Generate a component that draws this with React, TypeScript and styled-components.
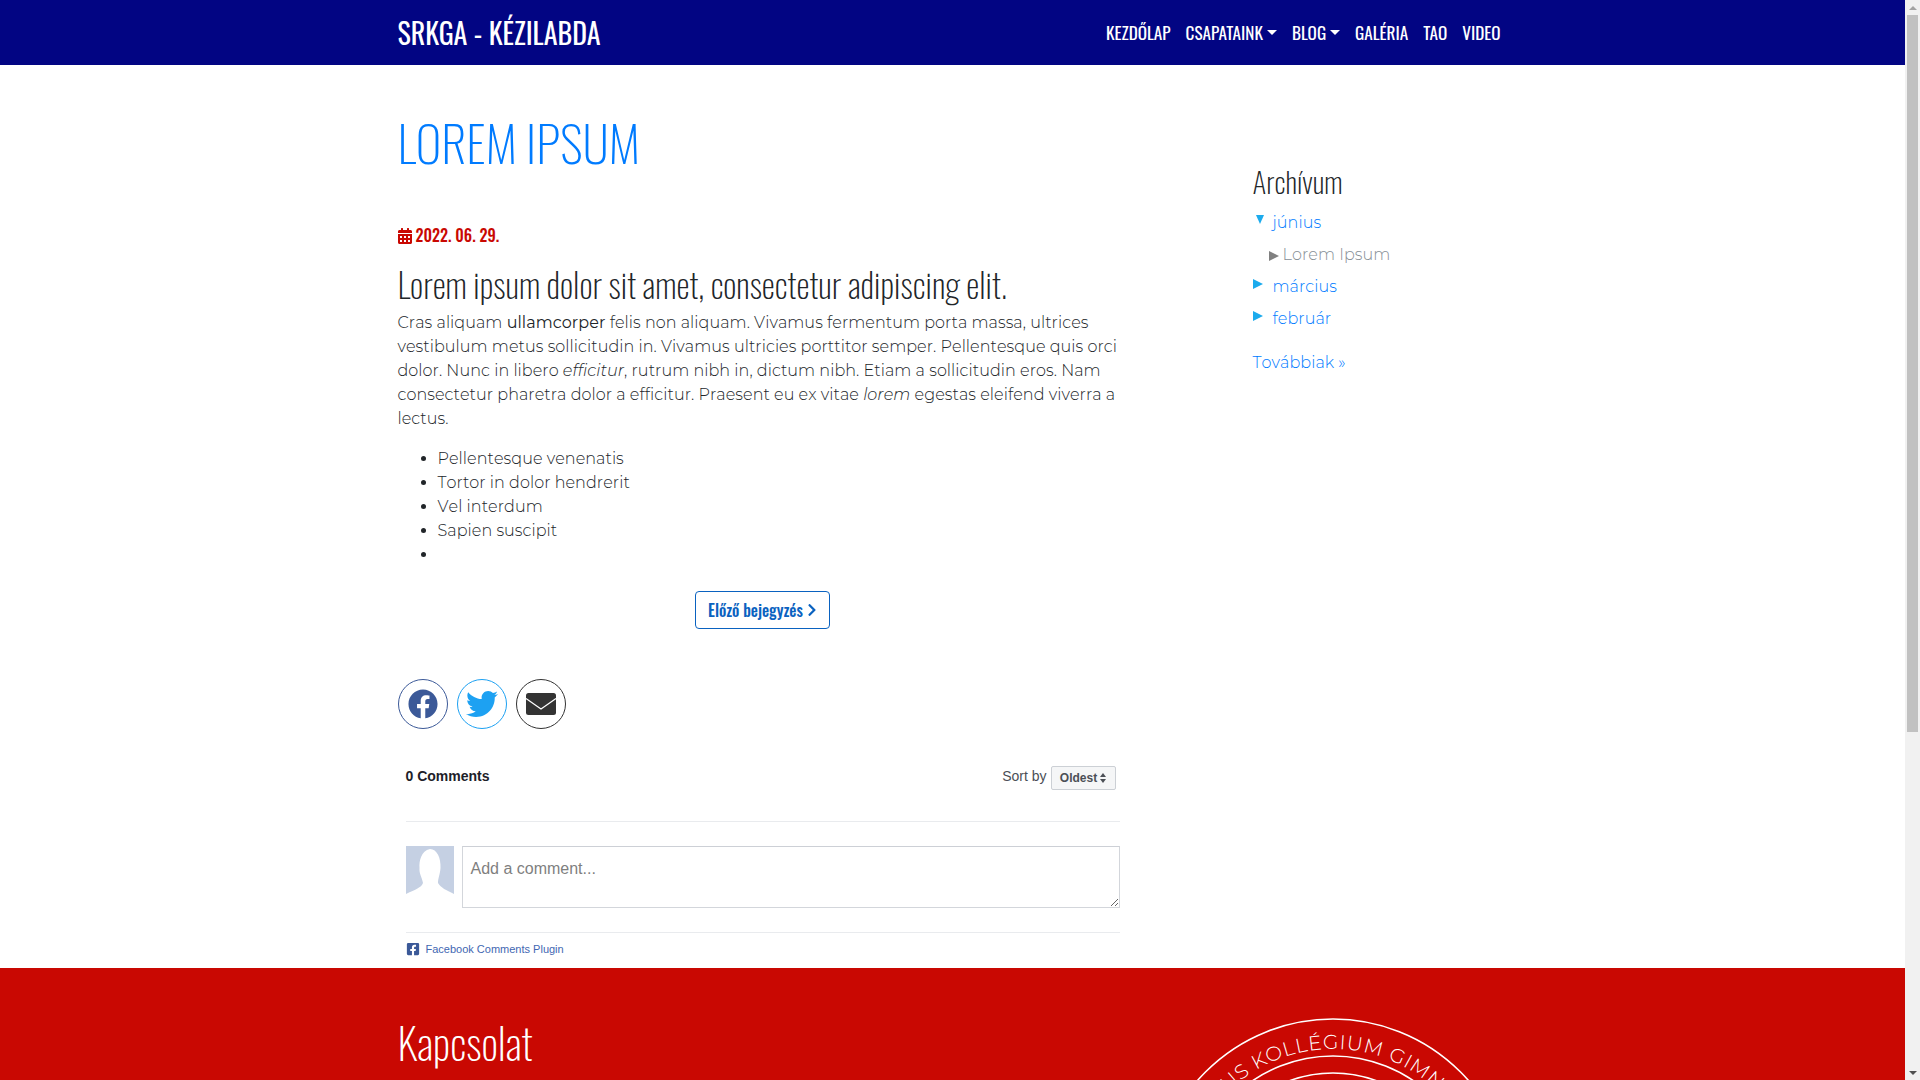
import React from "react";
import styled, { createGlobalStyle, css } from "styled-components";
import { FaFacebook, FaTwitter, FaCalendarAlt, FaChevronRight, FaFacebookSquare } from "react-icons/fa";

const GlobalStyle = createGlobalStyle`
  html, body { margin: 0; padding: 0; height: 100%; overflow: hidden; background: #fff; }
  * { box-sizing: border-box; }
  body { font-family: Montserrat, "Open Sans", sans-serif; font-size: 16px; font-weight: 300; line-height: 24px; color: #212529; }
  strong { font-weight: 400; }
`;

const HEAD = `Oswald, "Open Sans", sans-serif`;
const NAVY = "#020583";
const RED = "#c90802";
const bodyText = css`font-kerning: none; text-rendering: optimizeSpeed; letter-spacing: 0.06px;`;

const Shell = styled.div`display: flex; width: 1920px; height: 1080px; overflow: hidden;`;
const Page = styled.div`width: 1905px; flex: none; display: flex; flex-direction: column;`;
const Container = styled.div`width: 1140px; margin: 0 auto; padding: 0 15px;`;

const Scrollbar = styled.aside`
  width: 15px; flex: none; background: #f1f1f1; display: flex; flex-direction: column; align-items: center;
`;
const ScrollArrow = styled.div<{ $dir: "up" | "down" }>`
  width: 0; height: 0; flex: none;
  border-left: 4px solid transparent; border-right: 4px solid transparent;
  ${(p) => p.$dir === "up"
    ? "border-bottom: 4px solid #a3a3a3; margin: 6px 0 5px;"
    : "border-top: 4px solid #505050; margin: auto 0 5px;"}
`;
const ScrollThumb = styled.div`width: 11px; height: 717px; flex: none; background: #c1c1c1;`;

const Navbar = styled.header`height: 65px; flex: none; background: ${NAVY};`;
const NavInner = styled(Container)`height: 65px; display: flex; align-items: center; justify-content: space-between;`;
const Brand = styled.a`font-family: ${HEAD}; font-size: 28px; font-weight: 400; color: #fff; line-height: 1; text-transform: uppercase;`;
const NavList = styled.nav`display: flex; align-items: center; gap: 15px; margin-right: 7px;`;
const NavItem = styled.a`
  font-family: ${HEAD}; font-size: 17.2px; font-weight: 400; color: #fff; line-height: 23px; text-transform: uppercase;
  display: flex; align-items: center;
`;
const Caret = styled.span`
  margin-left: 4px; width: 0; height: 0;
  border-left: 5px solid transparent; border-right: 5px solid transparent; border-top: 5px solid #fff;
`;

const Body = styled(Container)`display: flex; height: 903px; flex: none;`;
const Main = styled.main`width: 730px; flex: none; padding-top: 48px;`;
const Side = styled.aside`margin-left: 125px; width: 255px; flex: none; padding-top: 99px;`;

const Title = styled.h1`
  margin: 0; font-family: ${HEAD}; font-size: 49.3px; font-weight: 200; line-height: 58px; color: #007bff; text-transform: uppercase;
`;
const DateLine = styled.div`
  margin-top: 51px; font-family: ${HEAD}; font-size: 16px; font-weight: 500; line-height: 27px; color: ${RED};
  display: flex; align-items: center; gap: 4px;
  svg { width: 14px; height: 16px; }
`;
const Heading = styled.h2`
  margin: 16px 0 8px; font-family: ${HEAD}; font-size: 34.1px; font-weight: 200; line-height: 38px; color: #212529;
`;
const Para = styled.p`margin: 0 0 16px; ${bodyText}`;
const Bullets = styled.ul`margin: 0; padding-left: 40px; min-height: 120px; ${bodyText}`;
const Bullet = styled.li`height: 24px;`;

const ButtonRow = styled.div`margin-top: 24px; display: flex; justify-content: center;`;
const OutlineButton = styled.a`
  width: 135px; height: 38px; border: 1px solid #0a62c0; border-radius: 4px; color: #0a62c0;
  font-family: ${HEAD}; font-size: 16px; font-weight: 500; display: flex; align-items: center; justify-content: center; gap: 4px;
  svg { width: 10px; height: 14px; }
`;

const Shares = styled.div`margin-top: 50px; display: flex; gap: 9px;`;
const Share = styled.a<{ $color: string }>`
  width: 50px; height: 50px; padding-bottom: 1px; border-radius: 50%; border: 1px solid ${(p) => p.$color}; color: ${(p) => p.$color};
  display: flex; align-items: center; justify-content: center;
`;

const Comments = styled.section`margin: 37px 8px 0 8px; font-family: "Liberation Sans", Arial, sans-serif; font-weight: 400; height: 202px;`;
const CommentHead = styled.div`
  display: flex; justify-content: space-between; height: 56px; border-bottom: 1px solid #e9ebee; padding-right: 4px;
`;
const CommentCount = styled.strong`font-size: 14px; font-weight: 700; line-height: 20px; color: #1d2129;`;
const SortBox = styled.div`display: flex; align-items: flex-start; gap: 4px; font-size: 14px; line-height: 20px; color: #4b4f56;`;
const SortButton = styled.span`
  width: 65px; height: 24px; border: 1px solid #ccd0d5; border-radius: 2px; background: #f5f6f7;
  font-size: 12px; font-weight: 700; color: #4b4f56; display: flex; align-items: center; justify-content: center; gap: 3px;
`;
const SortArrows = styled.svg`width: 6px; height: 10px; fill: #4b4f56;`;
const ComposeRow = styled.div`margin-top: 24px; display: flex; gap: 8px; height: 87px; border-bottom: 1px solid #e9ebee;`;
const Avatar = styled.svg`width: 48px; height: 48px; flex: none;`;
const CommentInput = styled.textarea`
  flex: 1; height: 62px; border: 1px solid #d3d6db; border-top-color: #cdd0d6; padding: 12px 8px 8px; margin: 0; resize: vertical; border-radius: 0;
  font-family: "Liberation Sans", Arial, sans-serif; font-size: 16px; line-height: 20px; color: #1d2129;
  &::placeholder { color: #7f7f7f; opacity: 1; }
`;
const PluginLine = styled.a`
  margin-top: 8px; display: flex; align-items: center; gap: 6px; font-size: 11px; line-height: 16px; color: #4267b2;
  svg { width: 14px; height: 14px; color: #3b5998; }
`;

const SideTitle = styled.h3`margin: 0 0 9px; font-family: ${HEAD}; font-size: 29.3px; font-weight: 200; line-height: 34px; color: #212529;`;
const ArchiveRow = styled.div<{ $indent?: boolean }>`
  height: 32px; display: flex; align-items: center; padding-left: ${(p) => (p.$indent ? "16px" : "0")}; ${bodyText}
`;
const Tri = styled.span<{ $open?: boolean; $grey?: boolean }>`
  width: 0; height: 0; flex: none;
  ${(p) => p.$open
    ? "border-left: 4px solid transparent; border-right: 4px solid transparent; border-top: 9px solid #1cabed; margin: 0 9px 7px 3px;"
    : `border-top: 5.5px solid transparent; border-bottom: 5.5px solid transparent; border-left: 10px solid ${p.$grey ? "#808080" : "#1cabed"}; margin: ${p.$grey ? "2px 4px 0 0" : "0 10px 6px 0"};`}
`;
const ArchiveLink = styled.a`color: #007bff;`;
const ArchivePost = styled.span`color: #868e96;`;
const MoreLink = styled.a`display: block; margin-top: 16px; color: #007bff; line-height: 24px; ${bodyText}`;

const Footer = styled.footer`flex: 1; background: ${RED};`;
const FooterInner = styled(Container)`display: flex; justify-content: space-between; height: 112px;`;
const FooterTitle = styled.h2`margin: 50px 0 0; font-family: ${HEAD}; font-size: 42.8px; font-weight: 200; line-height: 48px; color: #fff;`;
const Emblem = styled.svg`flex: none; width: 364px; height: 364px; margin: 49px -7px 0 0;`;

function MailIcon() {
  return (
    <svg width="30" height="22" viewBox="0 0 30 22" aria-hidden="true">
      <rect x="0" y="0" width="30" height="22" rx="2.5" fill="#333" />
      <path d="M0 5.5 L15 16 L30 5.5" fill="none" stroke="#fff" strokeWidth="1.2" />
    </svg>
  );
}

export default function App() {
  return (
    <Shell>
      <GlobalStyle />
      <Page>
        <Navbar>
          <NavInner>
            <Brand>SRKGA - Kézilabda</Brand>
            <NavList>
              <NavItem>Kezdőlap</NavItem>
              <NavItem>Csapataink<Caret /></NavItem>
              <NavItem>Blog<Caret /></NavItem>
              <NavItem>Galéria</NavItem>
              <NavItem>TAO</NavItem>
              <NavItem>Video</NavItem>
            </NavList>
          </NavInner>
        </Navbar>
        <Body>
          <Main>
            <Title>Lorem Ipsum</Title>
            <DateLine><FaCalendarAlt />2022. 06. 29.</DateLine>
            <Heading>Lorem ipsum dolor sit amet, consectetur adipiscing elit.</Heading>
            <Para>
              Cras aliquam <strong>ullamcorper</strong> felis non aliquam. Vivamus fermentum porta massa, ultrices
              vestibulum metus sollicitudin in. Vivamus ultricies porttitor semper. Pellentesque quis orci dolor. Nunc
              in libero <em>efficitur</em>, rutrum nibh in, dictum nibh. Etiam a sollicitudin eros. Nam consectetur
              pharetra dolor a efficitur. Praesent eu ex vitae <em>lorem</em> egestas eleifend viverra a lectus.
            </Para>
            <Bullets>
              <Bullet>Pellentesque venenatis</Bullet>
              <Bullet>Tortor in dolor hendrerit</Bullet>
              <Bullet>Vel interdum</Bullet>
              <Bullet>Sapien suscipit</Bullet>
              <Bullet />
            </Bullets>
            <ButtonRow>
              <OutlineButton>Előző bejegyzés <FaChevronRight /></OutlineButton>
            </ButtonRow>
            <Shares>
              <Share $color="#3b5998"><FaFacebook size={30} /></Share>
              <Share $color="#1da1f2"><FaTwitter size={32} /></Share>
              <Share $color="#333333"><MailIcon /></Share>
            </Shares>
            <Comments>
              <CommentHead>
                <CommentCount>0 Comments</CommentCount>
                <SortBox>
                  Sort by
                  <SortButton>
                    Oldest
                    <SortArrows viewBox="0 0 6 10"><path d="M3 0 6 4H0ZM3 10 0 6H6Z" /></SortArrows>
                  </SortButton>
                </SortBox>
              </CommentHead>
              <ComposeRow>
                <Avatar viewBox="0 0 48 48" aria-hidden="true">
                  <rect width="48" height="48" fill="#c5d0e3" />
                  <path d="M0 48 C10 43 15 42 17 37 C16 31 13 28 13.5 22 C13 15 15 5 24 3 C31 3 35 12 34.5 22 C34 29 32 32 32 37 C35 42 40 44 48 48Z" fill="#fff" />
                </Avatar>
                <CommentInput placeholder="Add a comment..." readOnly />
              </ComposeRow>
              <PluginLine><FaFacebookSquare />Facebook Comments Plugin</PluginLine>
            </Comments>
          </Main>
          <Side>
            <SideTitle>Archívum</SideTitle>
            <ArchiveRow><Tri $open /><ArchiveLink>június</ArchiveLink></ArchiveRow>
            <ArchiveRow $indent><Tri $grey /><ArchivePost>Lorem Ipsum</ArchivePost></ArchiveRow>
            <ArchiveRow><Tri /><ArchiveLink>március</ArchiveLink></ArchiveRow>
            <ArchiveRow><Tri /><ArchiveLink>február</ArchiveLink></ArchiveRow>
            <MoreLink>Továbbiak »</MoreLink>
          </Side>
        </Body>
        <Footer>
          <FooterInner>
            <FooterTitle>Kapcsolat</FooterTitle>
            <Emblem viewBox="0 0 364 364" aria-hidden="true">
              <defs><path id="emblem-arc" d="M 32 182 A 150 150 0 0 1 332 182" /></defs>
              <g fill="none" stroke="#fff">
                <circle cx="182" cy="182" r="180" strokeWidth="1.6" />
                <circle cx="182" cy="182" r="143" strokeWidth="1.6" />
                <circle cx="182" cy="182" r="126" strokeWidth="1.6" />
              </g>
              <text fill="#fff" fontFamily="Montserrat, 'Open Sans', sans-serif" fontSize="20" fontWeight="300" letterSpacing="0.8">
                <textPath href="#emblem-arc" startOffset="52.4%" textAnchor="middle">TÓLIUS KOLLÉGIUM GIMNÁZIUM</textPath>
              </text>
            </Emblem>
          </FooterInner>
        </Footer>
      </Page>
      <Scrollbar>
        <ScrollArrow $dir="up" />
        <ScrollThumb />
        <ScrollArrow $dir="down" />
      </Scrollbar>
    </Shell>
  );
}
